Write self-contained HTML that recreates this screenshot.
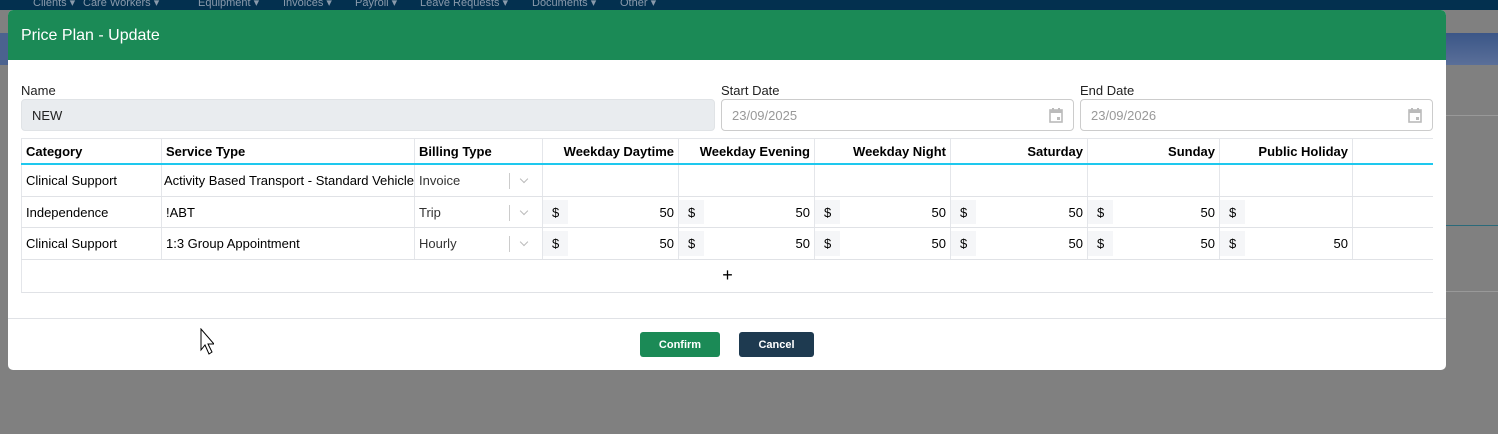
<!DOCTYPE html>
<html><head><style>
*{box-sizing:border-box;margin:0;padding:0}
body{width:1498px;height:434px;overflow:hidden;background:#808080;font-family:"Liberation Sans",Arial,sans-serif;font-size:13px;color:#000;position:relative}
.a{position:absolute}
.nav{left:0;top:0;width:1498px;height:10px;background:#03304f;overflow:hidden}
.nav span{position:absolute;top:-4px;color:#8a9aab;font-size:11px}
.modal{left:8px;top:10px;width:1438px;height:360px;background:#fff;border-radius:5px;overflow:hidden}
.hdr{left:0;top:0;width:1438px;height:50px;background:#1b8a56;color:#fff;font-size:16px;padding:17px 13px}
.lbl{font-size:13px;color:#222}
.inp{height:32px;border:1px solid #ccc;border-radius:4px;padding:8px 10px;color:#999}
.cell{position:absolute;height:100%;border-right:1px solid #e4e6ea;padding:0 4px;display:flex;align-items:center;white-space:nowrap}
.row{position:absolute;left:13px;width:1412px;border-bottom:1px solid #e0e2e6}
.th{font-weight:bold;font-size:13px}
.r{justify-content:flex-end}
.dl{position:absolute;left:0;top:3px;bottom:3px;width:25px;background:#f5f6f8;display:flex;align-items:center;padding-left:9px}
.sel{position:absolute;right:0;top:0;height:100%;width:33px}
.sel:before{content:"";position:absolute;left:0;top:8px;height:16px;border-left:1px solid #ccc}
.sel:after{content:"";position:absolute;left:12px;top:11px;width:5px;height:5px;border-right:1px solid #bbb;border-bottom:1px solid #bbb;transform:rotate(45deg)}
.btn{top:322px;height:25px;border-radius:3px;color:#fff;font-size:11px;font-weight:bold;display:flex;align-items:center;justify-content:center}
</style></head><body>
<div class="a nav"><span style="left:33px">Clients ▾</span><span style="left:83px">Care Workers ▾</span><span style="left:198px">Equipment ▾</span><span style="left:283px">Invoices ▾</span><span style="left:355px">Payroll ▾</span><span style="left:420px">Leave Requests ▾</span><span style="left:532px">Documents ▾</span><span style="left:620px">Other ▾</span></div>
<div class="a" style="left:1446px;top:33px;width:52px;height:32px;background:linear-gradient(#3b5687,#5a6f99)"></div>
<div class="a" style="left:0;top:33px;width:8px;height:32px;background:#4b628f"></div>
<div class="a" style="left:1446px;top:115px;width:52px;height:1px;background:#999"></div>
<div class="a" style="left:1446px;top:225px;width:52px;height:1px;background:#2a6a7a"></div>
<div class="a" style="left:1446px;top:291px;width:52px;height:1px;background:#999"></div>
<div class="a modal">
<div class="a hdr">Price Plan - Update</div>
<div class="a lbl" style="left:13px;top:73px">Name</div>
<div class="a inp" style="left:13px;top:89px;width:694px;height:32px;background:#e9ecef;border-color:#e0e3e6;color:#222">NEW</div>
<div class="a lbl" style="left:713px;top:73px">Start Date</div>
<div class="a inp" style="left:713px;top:89px;width:353px">23/09/2025<svg class="a" style="right:10px;top:8px" width="14" height="15" viewBox="0 0 14 15"><rect x="1" y="2" width="12" height="12" fill="none" stroke="#bbb" stroke-width="1.6"/><rect x="1" y="2" width="12" height="3" fill="#bbb"/><rect x="3" y="0" width="2" height="3" fill="#bbb"/><rect x="9" y="0" width="2" height="3" fill="#bbb"/><rect x="8" y="9" width="3" height="3" fill="#bbb"/></svg></div>
<div class="a lbl" style="left:1072px;top:73px">End Date</div>
<div class="a inp" style="left:1072px;top:89px;width:353px">23/09/2026<svg class="a" style="right:10px;top:8px" width="14" height="15" viewBox="0 0 14 15"><rect x="1" y="2" width="12" height="12" fill="none" stroke="#bbb" stroke-width="1.6"/><rect x="1" y="2" width="12" height="3" fill="#bbb"/><rect x="3" y="0" width="2" height="3" fill="#bbb"/><rect x="9" y="0" width="2" height="3" fill="#bbb"/><rect x="8" y="9" width="3" height="3" fill="#bbb"/></svg></div>

<div class="row th" style="top:128px;height:27px;border-top:1px solid #e4e6ea;border-bottom:2px solid #1ec8ee">
<div class="cell" style="left:0;width:141px;border-left:1px solid #e4e6ea">Category</div>
<div class="cell" style="left:141px;width:253px">Service Type</div>
<div class="cell" style="left:394px;width:128px">Billing Type</div>
<div class="cell r" style="left:522px;width:136px">Weekday Daytime</div>
<div class="cell r" style="left:658px;width:136px">Weekday Evening</div>
<div class="cell r" style="left:794px;width:136px">Weekday Night</div>
<div class="cell r" style="left:930px;width:137px">Saturday</div>
<div class="cell r" style="left:1067px;width:132px">Sunday</div>
<div class="cell r" style="left:1199px;width:133px">Public Holiday</div>
</div>

<div class="row" style="top:155px;height:32px">
<div class="cell" style="left:0;width:141px;border-left:1px solid #e4e6ea">Clinical Support</div>
<div class="cell" style="left:141px;width:253px;padding-left:2px">Activity Based Transport - Standard Vehicle</div>
<div class="cell" style="left:394px;width:128px;color:#333">Invoice<span class="sel"></span></div>
<div class="cell" style="left:522px;width:136px"></div><div class="cell" style="left:658px;width:136px"></div><div class="cell" style="left:794px;width:136px"></div><div class="cell" style="left:930px;width:137px"></div><div class="cell" style="left:1067px;width:132px"></div><div class="cell" style="left:1199px;width:133px"></div>
</div>

<div class="row" style="top:187px;height:31px">
<div class="cell" style="left:0;width:141px;border-left:1px solid #e4e6ea">Independence</div>
<div class="cell" style="left:141px;width:253px">!ABT</div>
<div class="cell" style="left:394px;width:128px;color:#333">Trip<span class="sel"></span></div>
<div class="cell r" style="left:522px;width:136px"><span class="dl">$</span>50</div>
<div class="cell r" style="left:658px;width:136px"><span class="dl">$</span>50</div>
<div class="cell r" style="left:794px;width:136px"><span class="dl">$</span>50</div>
<div class="cell r" style="left:930px;width:137px"><span class="dl">$</span>50</div>
<div class="cell r" style="left:1067px;width:132px"><span class="dl">$</span>50</div>
<div class="cell r" style="left:1199px;width:133px"><span class="dl">$</span></div>
</div>

<div class="row" style="top:218px;height:32px">
<div class="cell" style="left:0;width:141px;border-left:1px solid #e4e6ea">Clinical Support</div>
<div class="cell" style="left:141px;width:253px">1:3 Group Appointment</div>
<div class="cell" style="left:394px;width:128px;color:#333">Hourly<span class="sel"></span></div>
<div class="cell r" style="left:522px;width:136px"><span class="dl">$</span>50</div>
<div class="cell r" style="left:658px;width:136px"><span class="dl">$</span>50</div>
<div class="cell r" style="left:794px;width:136px"><span class="dl">$</span>50</div>
<div class="cell r" style="left:930px;width:137px"><span class="dl">$</span>50</div>
<div class="cell r" style="left:1067px;width:132px"><span class="dl">$</span>50</div>
<div class="cell r" style="left:1199px;width:133px"><span class="dl">$</span>50</div>
</div>

<div class="row" style="top:250px;height:33px;border-left:1px solid #e4e6ea;text-align:center;font-size:18px;line-height:30px">+</div>

<div class="a" style="left:0;top:308px;width:1438px;height:1px;background:#e0e2e6"></div>
<div class="a btn" style="left:632px;width:80px;background:#1b8a56">Confirm</div>
<div class="a btn" style="left:731px;width:75px;background:#1e3a50">Cancel</div>
<svg class="a" style="left:192px;top:318px" width="14" height="28" viewBox="0 0 14 28"><path d="M1 1 L1 22 L5 17 L9 26 L12 24 L8 16 L14 16 Z" fill="#fff" stroke="#000" stroke-width="1"/></svg>
</div>
</body></html>
